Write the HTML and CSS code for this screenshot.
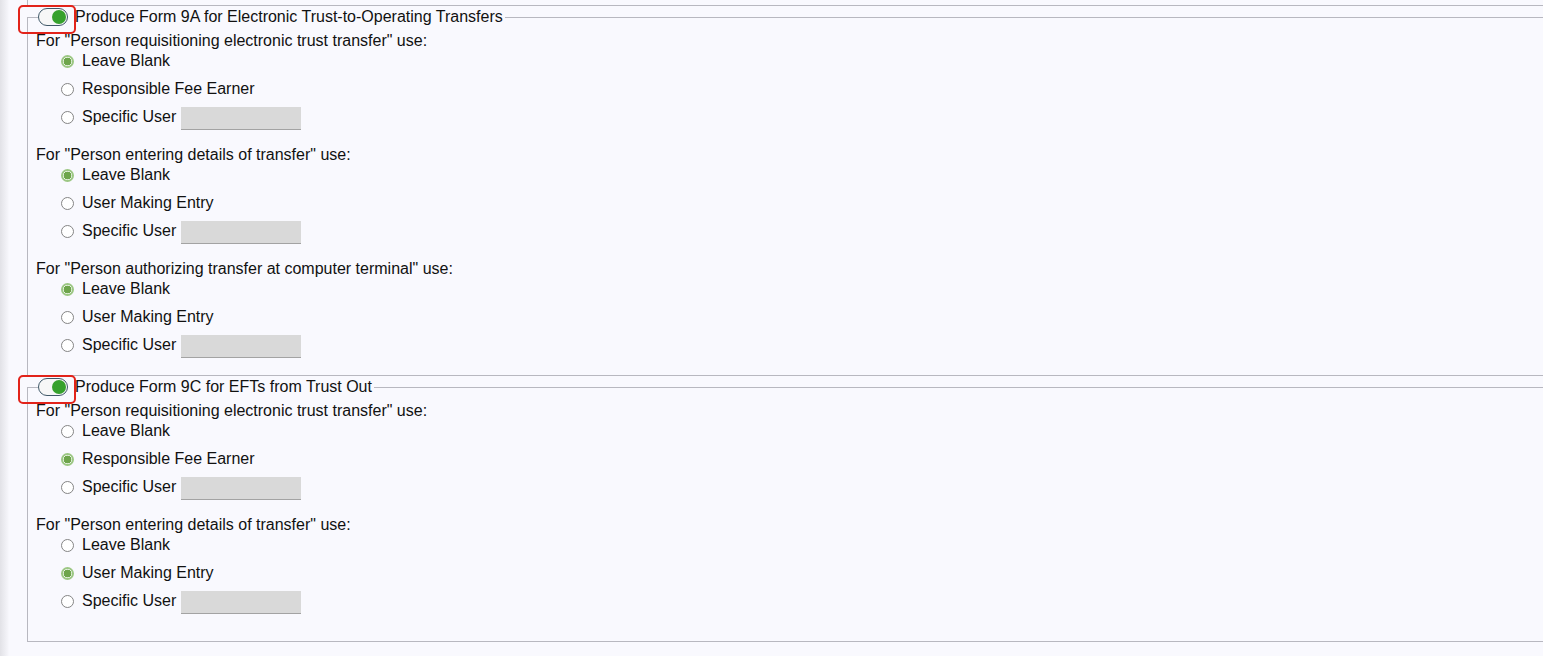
FILE: index.html
```html
<!DOCTYPE html>
<html lang="en">
  <head>
    <meta charset="UTF-8" />
    <title>EFT forms</title>
    <link rel="stylesheet" href="styles.css">
  </head>
  <body>
    <div class="page">
      <div class="prev-box"></div>

      <fieldset class="group">
        <legend>
          <span class="toggle on"><span class="knob"></span></span>
          <span>Produce Form 9A for Electronic Trust-to-Operating Transfers</span>
        </legend>

        <div class="block">
          <p class="label">For "Person requisitioning electronic trust transfer" use:</p>
          <label class="row"><input type="radio" name="a1" checked /> Leave Blank</label>
          <label class="row"><input type="radio" name="a1" /> Responsible Fee Earner</label>
          <label class="row"><input type="radio" name="a1" /> Specific User <input type="text" class="user" /></label>
        </div>

        <div class="block">
          <p class="label">For "Person entering details of transfer" use:</p>
          <label class="row"><input type="radio" name="a2" checked /> Leave Blank</label>
          <label class="row"><input type="radio" name="a2" /> User Making Entry</label>
          <label class="row"><input type="radio" name="a2" /> Specific User <input type="text" class="user" /></label>
        </div>

        <div class="block">
          <p class="label">For "Person authorizing transfer at computer terminal" use:</p>
          <label class="row"><input type="radio" name="a3" checked /> Leave Blank</label>
          <label class="row"><input type="radio" name="a3" /> User Making Entry</label>
          <label class="row"><input type="radio" name="a3" /> Specific User <input type="text" class="user" /></label>
        </div>
      </fieldset>

      <fieldset class="group last">
        <legend>
          <span class="toggle on"><span class="knob"></span></span>
          <span>Produce Form 9C for EFTs from Trust Out</span>
        </legend>

        <div class="block">
          <p class="label">For "Person requisitioning electronic trust transfer" use:</p>
          <label class="row"><input type="radio" name="b1" /> Leave Blank</label>
          <label class="row"><input type="radio" name="b1" checked /> Responsible Fee Earner</label>
          <label class="row"><input type="radio" name="b1" /> Specific User <input type="text" class="user" /></label>
        </div>

        <div class="block">
          <p class="label">For "Person entering details of transfer" use:</p>
          <label class="row"><input type="radio" name="b2" /> Leave Blank</label>
          <label class="row"><input type="radio" name="b2" checked /> User Making Entry</label>
          <label class="row"><input type="radio" name="b2" /> Specific User <input type="text" class="user" /></label>
        </div>
      </fieldset>
    </div>
  </body>
</html>
```

FILE: styles.css
```css
* {
  margin: 0;
  padding: 0;
  box-sizing: border-box;
}

html,
body {
  height: 100%;
  overflow: hidden;
}

body {
  font-family: "Liberation Sans", Arial, sans-serif;
  font-size: 16px;
  color: #111;
  background: linear-gradient(to right, #e2e2e7 0, #eeeef3 5px, #f5f5fa 8px, #f9f9fe 9px);
}

.page {
  padding-left: 27px;
  width: 1700px;
}

.prev-box {
  height: 6px;
  border-left: 1px solid #b8b8c0;
  border-bottom: 1px solid #b8b8c0;
}

.group {
  border: 1px solid #b8b8c0;
  margin-top: 2px;
  padding: 0 0 20px 8px;
}

.group.last {
  margin-top: 2px;
  padding-bottom: 30px;
}

.group legend {
  display: flex;
  align-items: center;
  gap: 7px;
  margin-left: 2px;
  padding-right: 2px;
  line-height: 18px;
}

.toggle {
  position: relative;
  display: inline-block;
  width: 30px;
  height: 18px;
  border: 1px solid #3f5868;
  border-radius: 9px;
  background: #f7f7f7;
}

/* red highlight box round the switch */
.toggle::after {
  content: "";
  position: absolute;
  left: -21px;
  top: -4px;
  width: 54px;
  height: 25px;
  border: 2px solid #e2231a;
  border-radius: 5px;
}

.knob {
  position: absolute;
  right: 1px;
  top: 1px;
  width: 14px;
  height: 14px;
  border-radius: 50%;
  background: #36a12c;
}

.block + .block {
  margin-top: 19px;
}

.label {
  margin-top: 6px;
  margin-bottom: 1px;
  line-height: 18px;
}

.row {
  display: flex;
  align-items: center;
  height: 20px;
  margin-left: 25px;
  gap: 8px;
  line-height: 20px;
}

.row + .row {
  margin-top: 8px;
}

.row input[type="radio"] {
  appearance: none;
  width: 13px;
  height: 13px;
  border: 1px solid #858585;
  border-radius: 50%;
  background: #fff;
  margin: 0;
}

.row input[type="radio"]:checked {
  border: 2px solid #9cc784;
  background: radial-gradient(circle, #6ea54c 0, #6ea54c 3.6px, #fff 4.2px);
}

.row input.user {
  width: 120px;
  height: 23px;
  margin: 3px 0 0 -3px;
  border: none;
  border-bottom: 1px solid #a3a3a3;
  background: #d9d9d9;
}
```
